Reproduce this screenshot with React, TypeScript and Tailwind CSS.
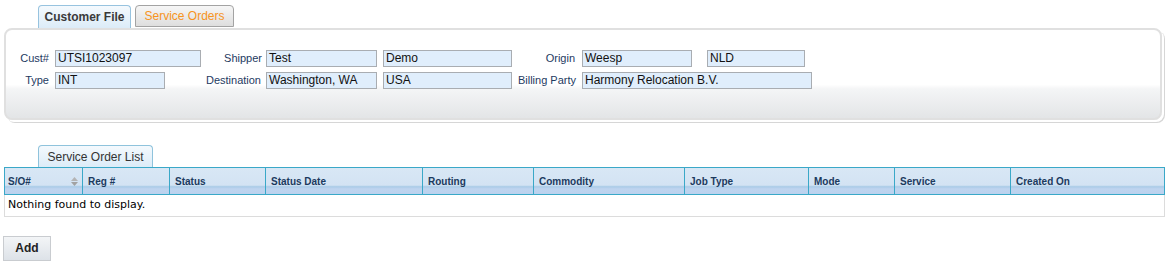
import React from 'react';

interface Column {
  label: string;
  width: string;
  sortable?: boolean;
}

const columns: Column[] = [
  { label: 'S/O#', width: 'w-[78px]', sortable: true },
  { label: 'Reg #', width: 'w-[87px]' },
  { label: 'Status', width: 'w-[96px]' },
  { label: 'Status Date', width: 'w-[157px]' },
  { label: 'Routing', width: 'w-[111px]' },
  { label: 'Commodity', width: 'w-[151px]' },
  { label: 'Job Type', width: 'w-[124px]' },
  { label: 'Mode', width: 'w-[86px]' },
  { label: 'Service', width: 'w-[116px]' },
  { label: 'Created On', width: 'w-[154px]' },
];

const Label: React.FC<{ text: string; className: string }> = ({ text, className }) => (
  <div className={`${className} shrink-0 text-right text-[11px] text-[#1e3a5f]`}>{text}</div>
);

const Field: React.FC<{ value: string; className: string }> = ({ value, className }) => (
  <div
    className={`${className} h-[17px] shrink-0 border border-[#a9adb2] bg-[#e0eefc] pl-[2px] text-[12px] leading-[15px] text-[#111]`}
  >
    {value}
  </div>
);

const SortIcon = () => (
  <svg width="7" height="9" viewBox="0 0 7 9" className="shrink-0">
    <path d="M3.5 0 L7 4 L0 4 Z" fill="#b4b4b4" />
    <path d="M0 5 L7 5 L3.5 9 Z" fill="#a2a2a2" />
  </svg>
);

export default function App() {
  return (
    <div className="min-h-screen w-[1175px] bg-white pt-[5px] font-['Liberation_Sans',Arial,sans-serif]">
      {/* Top tabs */}
      <div className="flex pl-[38px]">
        <div className="flex h-[23px] w-[93px] items-center justify-center rounded-t-[4px] border border-b-0 border-[#97c3df] bg-[linear-gradient(to_bottom,#f4f9fd_0%,#dcecf8_100%)] text-[12px] font-bold text-[#3a3a3a]">
          Customer File
        </div>
        <div className="ml-[4px] flex h-[22px] w-[99px] items-center justify-center rounded-t-[4px] border border-[#a3a3a3] bg-[linear-gradient(to_bottom,#f6f6f6_0%,#dedede_100%)] text-[12px] text-[#f7941d]">
          Service Orders
        </div>
      </div>

      {/* Customer file panel */}
      <div className="ml-[4px] h-[92px] w-[1158px] rounded-[8px] border-2 border-[#e0e0e0] bg-[linear-gradient(to_bottom,#ffffff_0%,#ffffff_62%,#f4f5f6_67%,#e3e5e7_100%)] pt-[20px] shadow-[2px_2px_0_0_#ffffff,3px_3px_0_0_#d6d6d6]">
        <div className="flex items-center">
          <Label text="Cust#" className="w-[43px]" />
          <Field value="UTSI1023097" className="ml-[6px] w-[146px]" />
          <Label text="Shipper" className="w-[61px]" />
          <Field value="Test" className="ml-[4px] w-[111px]" />
          <Field value="Demo" className="ml-[6px] w-[129px]" />
          <Label text="Origin" className="w-[63px]" />
          <Field value="Weesp" className="ml-[7px] w-[110px]" />
          <Field value="NLD" className="ml-[15px] w-[98px]" />
        </div>
        <div className="mt-[5px] flex items-center">
          <Label text="Type" className="w-[43px]" />
          <Field value="INT" className="ml-[6px] w-[110px]" />
          <Label text="Destination" className="w-[96px]" />
          <Field value="Washington, WA" className="ml-[5px] w-[111px]" />
          <Field value="USA" className="ml-[6px] w-[129px]" />
          <Label text="Billing Party" className="w-[64px]" />
          <Field value="Harmony Relocation B.V." className="ml-[6px] w-[230px]" />
        </div>
      </div>

      {/* Service order list */}
      <div className="mt-[25px] pl-[38px]">
        <div className="flex h-[22px] w-[115px] items-center justify-center rounded-t-[4px] border border-b-0 border-[#8fc3dc] bg-[linear-gradient(to_bottom,#f4f9fd_0%,#dcecf8_100%)] text-[12px] text-[#333]">
          Service Order List
        </div>
      </div>
      <div className="ml-[4px] w-[1161px]">
        <div className="flex h-[28px] border border-[#3aa8c8] bg-[linear-gradient(to_bottom,#d8e7f5_0%,#d3e3f3_66%,#a9cbe7_72%,#bed4ef_80%,#bcd2ee_100%)]">
          {columns.map((col, i) => (
            <div
              key={col.label}
              className={`${col.width} flex shrink-0 items-center justify-between ${i === 0 ? 'pl-[3px] pr-[4px]' : 'pl-[5px]'} ${i < columns.length - 1 ? 'border-r border-[#3aa8c8]' : ''} text-[10px] font-bold text-[#1b3a5e]`}
            >
              <span>{col.label}</span>
              {col.sortable && <SortIcon />}
            </div>
          ))}
        </div>
        <div className="flex h-[22px] items-center border border-t-0 border-[#dcdcdc] pl-[3px] font-['DejaVu_Sans',Verdana,sans-serif] text-[11px] text-black">
          Nothing found to display.
        </div>
      </div>

      {/* Actions */}
      <div className="mt-[18px] pl-[3px]">
        <button className="h-[25px] w-[48px] border border-[#c9ccd0] bg-[linear-gradient(to_bottom,#f3f5f7_0%,#dde2e8_100%)] text-[12px] font-bold text-[#222]">
          Add
        </button>
      </div>
    </div>
  );
}
